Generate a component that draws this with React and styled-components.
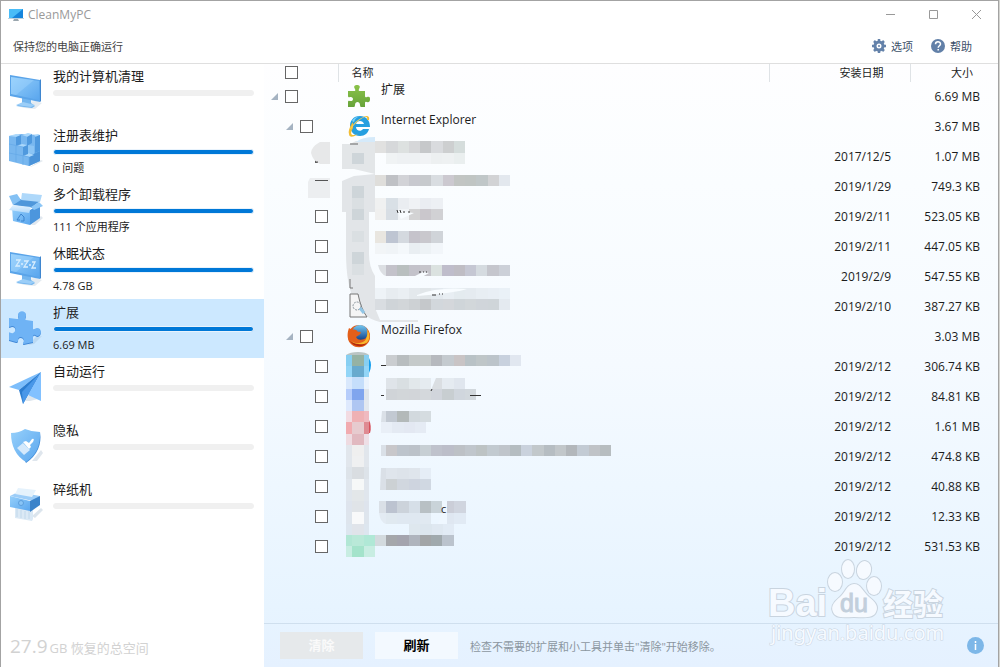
import { Fragment, useState } from "react";
import styled, { createGlobalStyle } from "styled-components";

const GlobalStyle = createGlobalStyle`
* {
  box-sizing: border-box;
}
body {
  margin: 0;
  background: #d4d4d0;
  font-family: "Open Sans", "Noto Sans CJK SC", sans-serif;
  font-size: 12px;
  color: #1c1c1c;
}
button, input {
  font-family: inherit;
}
`;

const Window = styled.div`
  display: flex;
  flex-direction: column;
  min-height: 100vh;
  margin-right: 1px;
  border: 1px solid #a3a3a3;
  border-bottom: none;
  background: white;
`;

const TitleBar = styled.header`
  display: flex;
  align-items: center;
  height: 27px;
  padding-left: 7px;
  color: #999;
`;

const Title = styled.span`
  flex: 1;
  padding-left: 4px;
`;

const WindowButton = styled.button`
  display: flex;
  align-items: center;
  justify-content: center;
  width: 43px;
  height: 27px;
  padding: 0;
  border: none;
  background: none;
`;

const SubBar = styled.div`
  display: flex;
  align-items: center;
  height: 36px;
  padding: 0 26px 0 12px;
  border-bottom: 1px solid #dfdfdf;
  font-size: 11px;
  position: relative;
  z-index: 1;
`;

const Slogan = styled.span`
  flex: 1;
  color: #444;
`;

const ToolButton = styled.button`
  display: flex;
  align-items: center;
  gap: 5px;
  margin-left: 18px;
  padding: 0;
  border: none;
  background: none;
  color: #3b4f68;
  font-size: 11px;
`;

const Body = styled.div`
  display: flex;
  flex: 1;
  margin-top: -1px;
`;

const Sidebar = styled.nav`
  display: flex;
  flex-direction: column;
  width: 263px;
  flex-shrink: 0;
`;

const SideItem = styled.button`
  display: flex;
  height: 59px;
  padding: 0 10px 0 7px;
  border: none;
  background: ${(p) => (p.$active ? "#cce8ff" : "transparent")};
  color: #1c1c1c;
  text-align: left;
`;

const SideIcon = styled.span`
  width: 36px;
  padding-top: 10px;
`;

const SideText = styled.span`
  display: flex;
  flex-direction: column;
  flex: 1;
  margin-left: 9px;
`;

const SideTitle = styled.span`
  height: 27px;
  font-size: 13px;
  line-height: 26px;
`;

const Bar = styled.span`
  height: 6px;
  border: 1px solid ${(p) => (p.$full ? "#e9f3fc" : "#f0f0f0")};
  border-radius: 3px;
  background: ${(p) => (p.$full ? "#0078d7" : "#f0f0f0")};
`;

const SideInfo = styled.span`
  font-size: 11px;
  line-height: 26px;
`;

const Total = styled.p`
  margin: auto 0 8px;
  padding-left: 9px;
  color: #d2d2d2;
  font-size: 13px;
`;

const TotalNumber = styled.span`
  margin-right: 2px;
  font-size: 19px;
`;

const Main = styled.main`
  position: relative;
  display: flex;
  flex-direction: column;
  flex: 1;
  background: linear-gradient(#fefeff 0%, #fafdff 20%, #f5faff 50%, #e7f4ff 90%, #e5f1ff 100%);
`;

const ListArea = styled.div`
  position: relative;
  flex: 1;
`;

const Table = styled.table`
  width: 100%;
  border-collapse: collapse;
  table-layout: fixed;
`;

const HeadCell = styled.th`
  width: ${(p) => p.$width || "auto"};
  height: 19px;
  padding: 0 ${(p) => p.$right || 0} 0 ${(p) => p.$left || 0};
  border-right: ${(p) => (p.$last ? "none" : "1px solid #dfe3e6")};
  font-size: 11px;
  font-weight: 400;
  line-height: 17px;
  text-align: ${(p) => p.$align || "left"};
`;

const Cell = styled.td`
  height: 30px;
  padding: 0 ${(p) => p.$right || 0} 0 0;
  font-size: 12px;
  line-height: 30px;
  text-align: ${(p) => p.$align || "left"};
`;

const Tree = styled.div`
  display: flex;
  align-items: center;
  gap: 7px;
  height: 30px;
  padding-bottom: 1px;
  padding-left: ${(p) => 7 + p.$level * 15}px;
`;

const Expander = styled.button`
  display: flex;
  width: 7px;
  height: 7px;
  padding: 0;
  border: none;
  background: none;
`;

const Indent = styled.span`
  width: 7px;
`;

const Check = styled.input`
  appearance: none;
  display: block;
  width: 13px;
  height: 13px;
  margin: 0;
  border: 1px solid #666;
  background: white;
  &:checked {
    background: #0078d7;
  }
`;

const Name = styled.div`
  display: flex;
  gap: 10px;
  height: 30px;
  padding: 1px 0 0 9px;
  line-height: 14px;
`;

const Smudges = styled.svg`
  position: absolute;
  top: 71px;
  left: 36px;
  pointer-events: none;
`;

const Footer = styled.footer`
  display: flex;
  align-items: center;
  height: 44px;
  padding: 0 14px 0 16px;
  border-top: 1px solid #cfdfee;
`;

const ActionButton = styled.button`
  width: 83px;
  height: 27px;
  margin-right: 12px;
  padding: 0 0 3px;
  border: none;
  background: ${(p) => (p.disabled ? "#e6e9eb" : "#f3f9ff")};
  color: ${(p) => (p.disabled ? "#fafafa" : "#000")};
  font-size: 13px;
  font-weight: 700;
`;

const Hint = styled.span`
  flex: 1;
  color: #8b96a0;
  font-size: 11px;
`;

const InfoButton = styled.button`
  display: flex;
  padding: 0;
  border: none;
  background: none;
`;

const Watermark = styled.svg`
  position: absolute;
  right: 48px;
  bottom: 16px;
  pointer-events: none;
`;

const sections = [
  { title: "我的计算机清理", icon: "monitor" },
  { title: "注册表维护", icon: "cubes", info: "0 问题" },
  { title: "多个卸载程序", icon: "box", info: "111 个应用程序" },
  { title: "休眠状态", icon: "sleep", info: "4.78 GB" },
  { title: "扩展", icon: "puzzle", info: "6.69 MB" },
  { title: "自动运行", icon: "plane" },
  { title: "隐私", icon: "shield" },
  { title: "碎纸机", icon: "shredder" },
];

const rows = [
  { level: 0, name: "扩展", icon: "puzzle", size: "6.69 MB" },
  { level: 1, name: "Internet Explorer", icon: "ie", size: "3.67 MB" },
  { level: 2, date: "2017/12/5", size: "1.07 MB" },
  { level: 2, date: "2019/1/29", size: "749.3 KB" },
  { level: 2, date: "2019/2/11", size: "523.05 KB" },
  { level: 2, date: "2019/2/11", size: "447.05 KB" },
  { level: 2, date: "2019/2/9", size: "547.55 KB" },
  { level: 2, date: "2019/2/10", size: "387.27 KB" },
  { level: 1, name: "Mozilla Firefox", icon: "firefox", size: "3.03 MB" },
  { level: 2, date: "2019/2/12", size: "306.74 KB" },
  { level: 2, date: "2019/2/12", size: "84.81 KB" },
  { level: 2, date: "2019/2/12", size: "1.61 MB" },
  { level: 2, date: "2019/2/12", size: "474.8 KB" },
  { level: 2, date: "2019/2/12", size: "40.88 KB" },
  { level: 2, date: "2019/2/12", size: "12.33 KB" },
  { level: 2, date: "2019/2/12", size: "531.53 KB" },
];

// blurred-out names: left, top, height, one colour for each block
const strips = [
  [75, 7, 12, "e1e1e0 d6d8da dde1e0 d6d7d9 c6c8ca d9dbde cdcfd0 d5dddc"],
  [86, 19, 11, "f0f3f4 eef1f3 eef1f3 f1f3f5 edf0f1 eef1f2 eaefef"],
  [75, 41, 11, "dfdedb bfc1c5 d2d3d7 c8c9cf c7cacd d9dde1 ccc9d0 c2c5c3 c0c5c3 c0c7c8 d2d3d5 e3e8ee"],
  [75, 64, 11, "f0f1f1 d9e0e6 eaedf1 f0f2f5 eaedf2 edf0f4"],
  [75, 75, 11, "f0f0ef d8dee4 f1f4f7 d3d3d4 cac7cc d1d1d4"],
  [75, 97, 12, "e9e6e0 bec5d2 d4d9df c5c3cb c9c8cd d0d4d9"],
  [75, 109, 11, "f2f5f7 f0f4f7 f4f8fb e9eef2 edf2f5 f2f6fa"],
  [86, 131, 11, "c3c2ca b9bfbf c3c2ca c6c5cb dbe2e0 bfbdcb bfbdc4 c5c7d3 d5dbe0 c5c6cd ccd0d8"],
  [75, 154, 11, "eef3f7 e7ecf0 eaeff3 e4e9ed e1e6e9 e3e9ee e8eef3 e4ebef e5ebf0 e8eef3 e9eff5 eaf1f7"],
  [75, 165, 11, "d9dde1 cfd4d8 d2d6d9 cdd1d4 c5c8cb d2d7dc d4d7db cfd5d9 d2d7da d0d5da cfd5d9 e4eaf0"],
  [86, 221, 11, "cacdd0 b8bdbf c5caca c6cbcb b6b9be c4cacf c9c4c5 b9c2c6 bfc6c8 bcc4ca c8d1de e1e7f0"],
  [86, 244, 11, "dfe4e9 d9dfe2 e2e8eb e5ebf0 dadee2 e5ebf1 e0e6ee"],
  [86, 255, 11, "d0d4d8 d2d6d9 d2d5d9 d4d8dc d1d5dc c8ced1 d0d6dd d2d8dd"],
  [86, 277, 11, "c2c9d2 b3b9b9 d2d9de d5dce0"],
  [81, 288, 11, "e9eff7 e4eaf3 e3e8f2 e5ebf4"],
  [86, 311, 11, "c8c7ca bdc4cc bcc2c9 c7cfd4 bfc2cc bcbec9 bdc1c6 c0c6cc bdc3c4 c2cad0 c0c5cb b5bdc1 cad2dd c2c8cb b6bdc2 c2c7ca b3b7bb c3cbd4 c0c3c7 b7bdc0"],
  [86, 334, 11, "dfe5ec dde3ea dfe5ec e5edf6"],
  [86, 345, 11, "ccd1d4 d1d7df ced4df d0d8e2"],
  [143, 367, 12, "cbced8 d0d5df"],
  [86, 367, 12, "bcc3d0 ccd3db d6dfe8 b8c0c4 c9d3d9"],
  [143, 379, 11, "dfe7f1 e1eaf4"],
  [86, 379, 11, "e0e9f0 dfe8f1 dfe8f1 e0e9f1"],
  [109, 390, 11, "dee7ee dce6ee dfe8f1 e2ebf5"],
  [86, 401, 11, "a5a7ab a4a4ae afb4bd a2a5a7 a0a9ad bbc3cd"],
];

// blurred-out icons: top, height, left, middle and right colour
const iconStrips = [
  [221, 11, "87cff2", "95b2a4", "87cff2"],
  [232, 11, "92d5f7", "68aace", "92d5f7"],
  [243, 12, "d9e8fc", "c5defb", "eaf3fd"],
  [255, 11, "b6cdfb", "80a5ee", "dfe5ec"],
  [266, 11, "dee9fd", "afc6f2", "e3e8ef"],
  [277, 11, "f2dbe2", "efb1b4", "f0bac0"],
  [288, 12, "f1abb0", "e7cbcf", "df8a92"],
  [300, 11, "eedbe1", "e1b9c0", "eedfe6"],
  [311, 11, "e1e6ec", "efefef", "e1e6ec"],
  [322, 11, "e1e6ec", "eff0f1", "e1e6ec"],
  [333, 12, "dde3e9", "d9dde1", "dde3e9"],
  [345, 11, "e0e6ed", "f6f8f8", "e0e6ed"],
  [356, 11, "e0e6ed", "e3e7e9", "e0e6ed"],
  [367, 11, "dee4ed", "e0e4e8", "dee4ed"],
  [378, 12, "dee5ed", "f8f9fa", "dee5ed"],
  [390, 11, "dde6ef", "e0e4ea", "dde6ef"],
  [401, 11, "b2e7d5", "b9e9d8", "b0e8d6"],
  [412, 11, "c8ede2", "a4e3cb", "c8ede2"],
];

function Mosaic() {
  return (
    <Smudges width="330" height="430" aria-hidden="true">
      <path d="M30 8H20Q11 13 11 19Q13 27 20 30H30Z" fill="#e7e8e9" />
      <path d="M10 44H30V64H8V48Z" fill="#eceef0" />
      <path d="M15 28h3M15 46.500h13" stroke="#555" />
      <path d="M42 10H50L56 7H75V40L54 35H42Z" fill="#e3e6e8" />
      <path d="M56 8Q62 3 75 3V8Z" fill="#d5eafa" />
      <path d="M50 10h8" stroke="#666" />
      <path d="M42 47L54 42L75 40V78H69V120Q69 133 75 142V174L80 186H118V188H80Q62 184 54 166Q46 150 46 118V78H42Z" fill="#e2e5e8" />
      <path d="M52 19H64V30H52Z M52 52H64V64H52Z M52 75H64V86H52Z M52 118H64V130H52Z" fill="#ced5d9" />
      <path d="M52 64H64V75H52Z M52 97H64V108H52Z M52 130H64V141H52Z" fill="#dadfe2" />
      <path d="M50 160H58Q61 175 67 183H50Z" fill="#f5f5f5" stroke="#777" />
      <circle cx="57" cy="172" r="4" fill="none" stroke="#8b959c" strokeDasharray="2 1" />
      <path d="M60 174l4 5" stroke="#91c5e5" strokeWidth="3" />
      <path d="M50 145v9h3" fill="none" stroke="#777" />
      {strips.map(([x, y, h, colors]) => (
        <Fragment key={`${x}-${y}`}>
          {colors.split(" ").map((color, i) => {
            const left = Math.round(i * 11.25);
            const right = Math.round((i + 1) * 11.25);
            return <rect key={i} x={x + left} y={y} width={right - left} height={h} fill={`#${color}`} />;
          })}
        </Fragment>
      ))}
      <path d="M78 131H86V142Q80 140 78 131Z" fill="#dcdfe3" />
      <path d="M82 277H86V288H81Z M81 311H86V322H81Z M79 367H86V379H79Z M81 334H86V356H80Z" fill="#dae0e7" />
      <path d="M75 401H86V412H75Z" fill="#d3dade" />
      <path d="M79 379H86V390Q80 388 79 379Z" fill="#e3ebf3" />
      <path d="M97 77l17 2-13 6z M115 142l8-4 6 1-7 4z M117 161q20-8 50-6q-12 4-50 7z" fill="#f8fcff" />
      <path d="M97 76l1 3M100 76l1 3M104 77v2M108 78h2M119 138h2M123 138h1M126 138h1M132 161h4M139 160h1M142 160h1" stroke="#333" />
      <path d="M81 231.500h5M81 261.500h3M170 261.500h11" stroke="#333" />
      <path d="M131 256L136 244H131Z" fill="#f1f8ff" />
      <path d="M131 257l1-2" stroke="#333" />
      {iconStrips.map(([y, h, a, b, c]) => (
        <Fragment key={y}>
          <rect x="46" y={y} width="6" height={h} fill={`#${a}`} />
          <rect x="52" y={y} width="12" height={h} fill={`#${b}`} />
          <rect x="64" y={y} width={y > 400 ? 11 : 5} height={h} fill={`#${c}`} />
        </Fragment>
      ))}
      <path d="M46 221Q50 218 58 218Q66 218 69 221Z" fill="#b9c4c4" />
      <path d="M69 224Q73 231 69 239Z" fill="#159fee" />
      <path d="M69 286Q72 292 70 299H69Z" fill="#d7525d" />
      <path d="M142 367h5v23h-9l4-11z" fill="#eff7ff" />
      <text x="141" y="379" fontSize="11" fill="#222">c</text>
    </Smudges>
  );
}

function Gradients() {
  return (
    <svg width="0" height="0" style={{ position: "absolute" }} aria-hidden="true">
      <defs>
        <linearGradient id="sky" x1="0" y1="0" x2="1" y2="1">
          <stop offset="0" stopColor="#96d0fb" />
          <stop offset="1" stopColor="#5aa6ee" />
        </linearGradient>
        <linearGradient id="pale" x1="0" y1="0" x2="0" y2="1">
          <stop offset="0" stopColor="#e3f2fe" />
          <stop offset="1" stopColor="#b3dafa" />
        </linearGradient>
        <linearGradient id="leaf" x1="0" y1="0" x2="0" y2="1">
          <stop offset="0" stopColor="#8bc34a" />
          <stop offset="1" stopColor="#67a33a" />
        </linearGradient>
        <linearGradient id="fire" x1="0" y1="0" x2="1" y2="1">
          <stop offset="0" stopColor="#e8641b" />
          <stop offset="0.6" stopColor="#d94a10" />
          <stop offset="1" stopColor="#f6b52c" />
        </linearGradient>
        <linearGradient id="globe" x1="0" y1="0" x2="0" y2="1">
          <stop offset="0" stopColor="#73c8f2" />
          <stop offset="1" stopColor="#0b3a86" />
        </linearGradient>
      </defs>
    </svg>
  );
}

const puzzlePath =
  "M1 10L9 11C12 11 10 9 10 7C10 2 18 2 18 7C18 9 16 12 18 12L25 13V20C25 23 27 20 29 20C34 20 34 27 30 28C28 28 26 25 25 28V34L16 36C14 36 16 34 16 32C15 28 10 28 10 32C10 34 9 34 8 34L1 32V25C1 23 3 26 5 25C9 23 8 18 4 18C3 18 1 20 1 18Z";

function Screen({ sleeping }) {
  return (
    <>
      <path d="M10 33l6-4 12-1 6 2-7 6-11-1z" fill="#e4ebf1" />
      <path d="M14 25h9v5l4 3-3 2-16-2 6-3z" fill="#73b5ee" />
      <path d="M8 32l7-3 12 3-4 2z" fill="#9bcef8" />
      <path d="M32 7l1-1v22l-1 1z" fill="#3f86cf" />
      <path d="M2 2l30 5v22L2 23z" fill="#5aa4e9" />
      <path d="M3 4l28 4v19L3 21z" fill="url(#sky)" />
      <path d="M3 4l23 3L8 22l-5-1z" fill="#a5d8ff" opacity=".4" />
      {sleeping && (
        <path d="M8 10h4l-4 6h4M13 14h2M16 11h4l-4 6h4M21 15h2M24 12h3l-3 6h4" fill="none" stroke="#d9eefe" strokeWidth="1.300" />
      )}
    </>
  );
}

function SectionIcon({ name }) {
  return (
    <svg width="36" height="40" viewBox="0 0 36 40" aria-hidden="true">
      {name === "monitor" && <Screen />}
      {name === "sleep" && <Screen sleeping />}
      {name === "cubes" && (
        <g transform="translate(0 1)">
          <path d="M22 34l11-7 2 1-12 6z" fill="#e2e9ef" />
          <path d="M1 3l12-2 19 1v26l-11 5L1 28z" fill="#78b7ef" />
          <path d="M21 23l11-5v10l-11 5z" fill="#4a93d9" />
          <path d="M1 3l7-2 5 1-4 2zM14 2l6-2 4 1-4 3zM26 2l4-1 2 1-4 2zM9 13l5-2 5 1-4 2zM15 22l6-2 5 2-5 2z" fill="#abd8fb" />
          <path d="M8 4l5-2v9l-5 2zM19 4l5-3v9l-5 3zM15 14l5-2v9l-5 2zM27 4l5-2v16l-5 2z" fill="#4f99de" />
          <path d="M20 12l6 1v8l-6-1z" fill="#8cc5f5" />
          <path d="M1 11l14 3M1 20l20 4M8 13v16M15 22v10M21 24v9" stroke="#66aae8" strokeWidth=".8" />
        </g>
      )}
      {name === "box" && (
        <>
          <path d="M23 34l10-9 2 2-8 7z" fill="#e1e8ef" />
          <path d="M12 8l20 2-9 7L5 14z" fill="#4f97da" />
          <path d="M1 5l8-2 4 6-8 5z" fill="#84c1f4" />
          <path d="M14 2l20 2-2 7-19-2z" fill="#aed8fa" />
          <path d="M4 16l18 3v15L5 30z" fill="url(#sky)" />
          <path d="M22 19l10-6v14l-10 7z" fill="#4c96dd" />
          <path d="M5 14l18 2-2 6-20-3z" fill="url(#pale)" />
          <path d="M23 16l8-5 4 4-9 4z" fill="#8cc6f6" />
          <path d="M13 23l-4 6h3M13 23l3 3v4h-3" fill="none" stroke="#3b84cf" />
        </>
      )}
      {name === "puzzle" && (
        <>
          <path d="M20 36l8-8 6-1-8 8z" fill="#a9c9e5" opacity=".5" />
          <path d={puzzlePath} fill="#4289d7" />
          <path d={puzzlePath} fill="#6fb3f5" transform="translate(0 -1)" />
        </>
      )}
      {name === "plane" && (
        <>
          <path d="M17 33l5-8 8 6-8 2z" fill="#dde6ee" />
          <path d="M1 19L33 4 11 22z" fill="#7dbefb" />
          <path d="M33 4L11 22l4 14z" fill="#2c7dd0" />
          <path d="M33 4v29l-13-6z" fill="#82c1ff" />
          <path d="M33 4L20 27l-5 9-1-12z" fill="#4997e8" />
        </>
      )}
      {name === "shield" && (
        <g transform="translate(0 2)">
          <path d="M24 32l9-11 2 3-6 8z" fill="#dfe6ed" />
          <path d="M32 3q3 19-14 31l-1-2z" fill="#3f8cd9" />
          <path d="M3 4q8 0 14-4 7 3 15 3 1 20-14 30Q3 24 3 4z" fill="url(#sky)" />
          <path d="M9 19l6-5 7 7-6 5z" fill="#d4e9fc" />
          <path d="M15 13l3-1 3 2 3-4q3-1 1 3l-3 3 1 2-2 2z" fill="#fff" />
        </g>
      )}
      {name === "shredder" && (
        <>
          <path d="M24 30l9-8 2 2-8 8z" fill="#dce5ed" />
          <path d="M7 21l18 3v9l-1 2-17-3z" fill="#dbe9f5" />
          <path d="M9 23v8M13 24v8M17 25v8M21 25v8" stroke="#c1d8eb" />
          <path d="M2 10l8-4 22 4-7 5z" fill="#9ccdf8" />
          <path d="M2 10l20 5v10L2 21z" fill="url(#sky)" />
          <path d="M22 15l10-5v9l-10 7z" fill="#3b83ca" />
          <path d="M7 8l3-6 18 2-4 7z" fill="#e5f2fc" />
          <circle cx="13" cy="17" r="2.500" fill="#8ac5f6" stroke="#5c9fdd" />
        </>
      )}
    </svg>
  );
}

function ListIcon({ name }) {
  return (
    <svg width="24" height="26" viewBox="0 0 24 26" aria-hidden="true">
      {name === "puzzle" && (
        <path
          fill="url(#leaf)"
          d="M1 8h6q2 0 1-2C6 3 8 2 10 2s4 1 2 4q-1 2 1 2h5v5q0 2 2 1c3-1 3 1 3 2s0 4-3 3q-2-1-2 1v4h-4q-1 0-1-2c0-4-5-4-5 0q0 2-1 2H1v-5q0-2 2-1c4 1 4-5 0-4q-2 1-2-1z"
        />
      )}
      {name === "ie" && (
        <>
          <path d="M13 3C6 3 3 8 3 13s4 10 10 10c5 0 8-3 9-7h-6c-2 3-7 2-7-2h14C23 7 19 3 13 3zM9 11c1-4 7-4 8 0z" fill="#259fe0" />
          <path d="M5 8C7 4 11 3 15 4c-4-1-7 1-8 5z" fill="#7ed4fa" />
          <path d="M22 7c1-4-2-5-6-3 3-1 5 0 4 3zM6 9C3 13 1 18 2 21c0 4 5 3 9 0-8 3-8-1-5-6z" fill="#f2bd35" />
          <path d="M3 16C7 9 14 4 20 3c-6 2-12 7-16 13z" fill="#f6cf5a" />
        </>
      )}
      {name === "firefox" && (
        <g transform="translate(0 1)">
          <circle cx="12" cy="12" r="11" fill="url(#fire)" />
          <circle cx="13" cy="9" r="8" fill="url(#globe)" />
          <path d="M2 4l3 2c3-1 5 0 6 2 3-1 4 1 1 3l-3 2c2 4 7 3 10 1 2-2 2-5 1-8 4 4 4 10 0 14-5 5-13 4-17-1C0 15 0 9 2 4z" fill="#e35f1a" />
          <path d="M20 5c4 6 3 12-2 15-5 3-11 1-14-3 6 4 13 2 15-2 1-3 2-6 1-10z" fill="#f8b82d" />
          <path d="M3 17c4 6 12 7 17 2-5 2-11 2-17-2z" fill="#b4280c" />
        </g>
      )}
    </svg>
  );
}

function BaiduMark() {
  return (
    <Watermark width="182" height="92" viewBox="0 0 182 92" aria-hidden="true">
      <g fill="#f6faff" stroke="#c9d4df" strokeWidth="2" paintOrder="stroke">
        <text x="0" y="57" fontSize="38" fontFamily="Liberation Sans" fontWeight="700">Bai</text>
        <ellipse cx="67" cy="23" rx="7" ry="9" />
        <ellipse cx="80" cy="10" rx="6" ry="9" />
        <ellipse cx="96" cy="11" rx="7" ry="9" transform="rotate(12 96 11)" />
        <ellipse cx="106" cy="27" rx="7" ry="9" />
        <path d="M86 25c7 0 9 8 15 13s10 9 7 15c-3 7-13 5-22 5s-18 2-21-5c-3-6 2-11 7-15s7-13 14-13z" />
        <text x="72" y="53" fontSize="25" fontFamily="Liberation Sans" fill="#c2cfdc" stroke="#c2cfdc" strokeWidth="1">du</text>
        <text x="115" y="56" fontSize="30" fontFamily="Noto Sans CJK SC" fontWeight="700">经验</text>
        <text x="3" y="81" fontSize="20" fontFamily="Noto Sans" strokeWidth="1">jingyan.baidu.com</text>
      </g>
    </Watermark>
  );
}

export default function App() {
  const [active, setActive] = useState(4);
  return (
    <Window>
      <GlobalStyle />
      <Gradients />
      <TitleBar>
        <svg width="16" height="14" viewBox="0 0 16 14" aria-hidden="true">
          <path d="M1 1h14v9H1z" fill="#1685dc" />
          <path d="M1 1h14L4 10H1z" fill="#49bcf7" />
          <path d="M0 10h16v1H0z" fill="#bdd1dd" />
          <path d="M6 11h4l1 2H5z" fill="#9aa6ae" />
        </svg>
        <Title>CleanMyPC</Title>
        <WindowButton aria-label="最小化">
          <svg width="11" height="11"><path d="M1 5.500h9" stroke="#999" /></svg>
        </WindowButton>
        <WindowButton aria-label="最大化">
          <svg width="11" height="11"><path d="M1.500 1.500h8v8h-8z" fill="none" stroke="#999" /></svg>
        </WindowButton>
        <WindowButton aria-label="关闭">
          <svg width="11" height="11"><path d="M1 1l9 9M10 1l-9 9" stroke="#999" /></svg>
        </WindowButton>
      </TitleBar>
      <SubBar>
        <Slogan>保持您的电脑正确运行</Slogan>
        <ToolButton>
          <svg width="14" height="14" viewBox="0 0 14 14" aria-hidden="true">
            <circle cx="7" cy="7" r="4" fill="none" stroke="#6482aa" strokeWidth="3" />
            <path d="M7 0v3M7 11v3M0 7h3M11 7h3M2 2l2 2M10 10l2 2M12 2l-2 2M4 10l-2 2" stroke="#6482aa" strokeWidth="2.500" />
            <circle cx="7" cy="7" r="1" fill="#6482aa" />
          </svg>
          选项
        </ToolButton>
        <ToolButton>
          <svg width="14" height="14" viewBox="0 0 14 14" aria-hidden="true">
            <circle cx="7" cy="7" r="7" fill="#6280a8" />
            <path d="M4.500 5.200C4.500 2 9.500 2 9.500 5c0 1.800-2.300 1.800-2.300 3.800M7.200 10v1.500" fill="none" stroke="#fff" strokeWidth="1.500" />
          </svg>
          帮助
        </ToolButton>
      </SubBar>
      <Body>
        <Sidebar>
          {sections.map((section, i) => (
            <SideItem key={section.title} $active={i === active} onClick={() => setActive(i)}>
              <SideIcon>
                <SectionIcon name={section.icon} />
              </SideIcon>
              <SideText>
                <SideTitle>{section.title}</SideTitle>
                <Bar $full={section.info} />
                <SideInfo>{section.info}</SideInfo>
              </SideText>
            </SideItem>
          ))}
          <Total>
            <TotalNumber>27.9</TotalNumber>GB 恢复的总空间
          </Total>
        </Sidebar>
        <Main>
          <ListArea>
            <Table>
              <thead>
                <tr>
                  <HeadCell $width="74px" $left="21px">
                    <Check type="checkbox" aria-label="全选" />
                  </HeadCell>
                  <HeadCell $left="13px">名称</HeadCell>
                  <HeadCell $width="141px" $align="right" $right="26px">安装日期</HeadCell>
                  <HeadCell $width="88px" $align="right" $right="25px" $last>大小</HeadCell>
                </tr>
              </thead>
              <tbody>
                {rows.map((row, i) => (
                  <tr key={i}>
                    <Cell>
                      <Tree $level={row.level}>
                        {row.name ? (
                          <Expander aria-label={`折叠 ${row.name}`}>
                            <svg width="7" height="7"><path d="M7 0v7H0z" fill="#a5b3c2" /></svg>
                          </Expander>
                        ) : (
                          <Indent />
                        )}
                        <Check type="checkbox" aria-label={row.name || `扩展 ${i}`} />
                      </Tree>
                    </Cell>
                    <Cell>
                      {row.name && (
                        <Name>
                          <ListIcon name={row.icon} />
                          {row.name}
                        </Name>
                      )}
                    </Cell>
                    <Cell $align="right" $right="19px">{row.date}</Cell>
                    <Cell $align="right" $right="18px">{row.size}</Cell>
                  </tr>
                ))}
              </tbody>
            </Table>
            <Mosaic />
          </ListArea>
          <Footer>
            <ActionButton disabled>清除</ActionButton>
            <ActionButton>刷新</ActionButton>
            <Hint>检查不需要的扩展和小工具并单击"清除"开始移除。</Hint>
            <InfoButton aria-label="信息">
              <svg width="17" height="17" viewBox="0 0 17 17">
                <circle cx="8.500" cy="8.500" r="8.500" fill="#7db7e8" />
                <path d="M8.500 4v2M8.500 7v6" stroke="#fff" strokeWidth="1.500" />
              </svg>
            </InfoButton>
          </Footer>
          <BaiduMark />
        </Main>
      </Body>
    </Window>
  );
}
